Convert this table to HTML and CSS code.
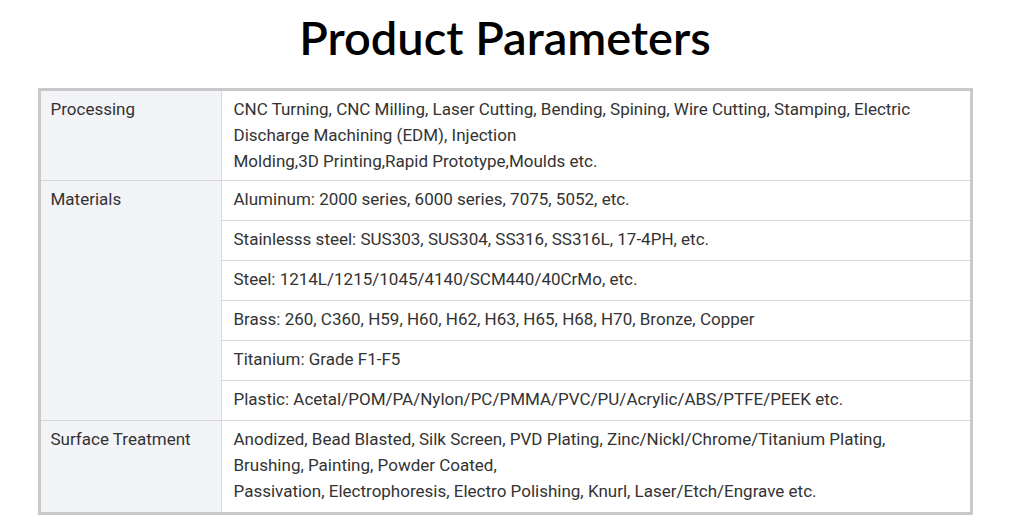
FILE: index.html
```html
<!DOCTYPE html>
<html lang="en">
<head>
<meta charset="utf-8">
<title>Product Parameters</title>
<link rel="stylesheet" href="styles.css">
</head>
<body>
<h1 class="title">Product Parameters</h1>
<table class="params">
  <tbody>
    <tr class="row-first">
      <th class="label">Processing</th>
      <td class="value">CNC Turning, CNC Milling, Laser Cutting, Bending, Spining, Wire Cutting, Stamping, Electric Discharge Machining (EDM), Injection<br>Molding,3D Printing,Rapid Prototype,Moulds etc.</td>
    </tr>
    <tr>
      <th class="label" rowspan="6">Materials</th>
      <td class="value">Aluminum: 2000 series, 6000 series, 7075, 5052, etc.</td>
    </tr>
    <tr><td class="value">Stainlesss steel: SUS303, SUS304, SS316, SS316L, 17-4PH, etc.</td></tr>
    <tr><td class="value">Steel: 1214L/1215/1045/4140/SCM440/40CrMo, etc.</td></tr>
    <tr><td class="value">Brass: 260, C360, H59, H60, H62, H63, H65, H68, H70, Bronze, Copper</td></tr>
    <tr><td class="value">Titanium: Grade F1-F5</td></tr>
    <tr><td class="value">Plastic: Acetal/POM/PA/Nylon/PC/PMMA/PVC/PU/Acrylic/ABS/PTFE/PEEK etc.</td></tr>
    <tr>
      <th class="label">Surface Treatment</th>
      <td class="value">Anodized, Bead Blasted, Silk Screen, PVD Plating, Zinc/Nickl/Chrome/Titanium Plating, Brushing, Painting, Powder Coated,<br>Passivation, Electrophoresis, Electro Polishing, Knurl, Laser/Etch/Engrave etc.</td>
    </tr>
  </tbody>
</table>
</body>
</html>
```
FILE: styles.css
```css
html, body {
  margin: 0;
  padding: 0;
  background: #ffffff;
}

body {
  font-family: Roboto, "Liberation Sans", sans-serif;
  color: #333333;
}

.title {
  margin: 0;
  padding: 6px 0 0;
  height: 81px;
  box-sizing: border-box;
  text-align: center;
  font-family: Lato, "Noto Sans", sans-serif;
  font-weight: 600;
  font-size: 47px;
  line-height: 62px;
  color: #000000;
}

.params {
  width: 935px;
  margin: 7px auto 0;
  border-collapse: collapse;
  border: 3px solid #c9c9c9;
  font-size: 17px;
  line-height: 26px;
}

.label,
.value {
  border: 1px solid #d9d9dc;
  vertical-align: top;
  text-align: left;
  font-weight: 400;
  padding: 5px 12px 8px;
}

.row-first .label,
.row-first .value {
  padding-bottom: 6px;
}

.label {
  width: 158px;
  padding-left: 10px;
  background: #f3f4f8;
}

.value {
  background: #ffffff;
}
```
